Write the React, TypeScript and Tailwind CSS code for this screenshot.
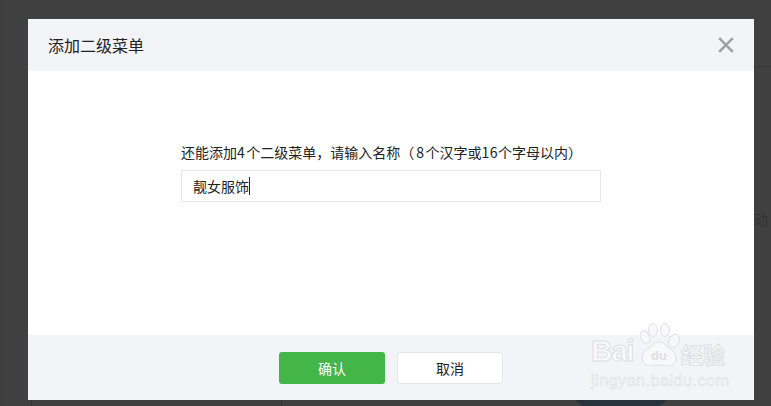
const font = "font-['Noto_Sans_CJK_SC','Noto_Sans',sans-serif]";

function Watermark() {
  return (
    <div className="absolute left-[591px] top-[323px] w-[138px] flex flex-col pointer-events-none select-none">
      <div className="flex items-end h-[43px]">
        <span className="w-[47px] text-[30px] leading-[30px] tracking-[-1.5px] font-bold font-['Liberation_Sans',sans-serif] text-[#f9f9fb] [-webkit-text-stroke:1px_#dedfe2]">
          Bai
        </span>
        <svg width="42" height="43" viewBox="0 0 42 43" className="shrink-0">
          <g fill="#f8f8fa" stroke="#dedfe2" strokeWidth="1">
            <ellipse cx="7" cy="14" rx="4.5" ry="6.5" transform="rotate(-25 7 14)" />
            <ellipse cx="15" cy="7" rx="4.5" ry="6.5" />
            <ellipse cx="27" cy="7" rx="4.5" ry="6.5" />
            <ellipse cx="36" cy="18" rx="5" ry="7" transform="rotate(25 36 18)" />
            <path d="M21 19c-5 0-7 4-10 6-4 3-7 5-7 10 0 5 4 8 9 8 3 0 5-1 8-1s5 1 9 1c5 0 8-3 8-8 0-5-3-7-7-10-3-2-5-6-10-6z" />
          </g>
          <text x="21" y="37" textAnchor="middle" fontSize="13" fontWeight="700" fontFamily="Liberation Sans" fill="#dedfe2">
            du
          </text>
        </svg>
        <span className={`ml-[1px] text-[22px] leading-[26px] font-bold text-[#f9f9fb] [-webkit-text-stroke:1px_#dedfe2] ${font}`}>
          经验
        </span>
      </div>
      <span className="mt-[6px] text-[16px] leading-[18px] tracking-[0.55px] whitespace-nowrap font-['Liberation_Sans',sans-serif] text-[#f9f9fb] [-webkit-text-stroke:0.6px_#dedfe2]">
        jingyan.baidu.com
      </span>
    </div>
  );
}

export default function App() {
  return (
    <div className={`relative w-[771px] h-[406px] overflow-hidden bg-[#404040] pt-[19px] pl-[28px] ${font}`}>
      {/* dimmed page behind the dialog */}
      <div className="absolute left-[1px] top-0 bottom-0 w-px bg-[#3c3c3c]" />
      <div className="absolute left-[31px] top-[400px] bottom-0 w-px bg-[#333333]" />
      <div className="absolute left-[281px] top-[400px] bottom-0 w-px bg-[#333333]" />
      <span className="absolute left-[754px] top-[209px] text-[14px] leading-5 text-[#333333]">动</span>
      <div className="absolute left-[754px] right-0 top-[66px] h-px bg-[#3a3a3a]" />
      <div className="absolute left-[575px] top-[400px] w-[92px] h-[6px] bg-[#26323c] [clip-path:polygon(0_0,100%_0,92%_100%,8%_100%)]" />

      <div className="relative w-[726px] h-[381px] bg-white flex flex-col">
        <div className="h-[52px] bg-[#f3f4f8] flex items-center justify-between pl-5 pr-5">
          <h3 className="text-[16px] leading-6 font-normal text-[#222222]">添加二级菜单</h3>
          <svg width="16" height="16" viewBox="0 0 16 16" className="-mt-px">
            <path d="M1.2 1.2l13.6 13.6M14.8 1.2L1.2 14.8" stroke="#a0a0a2" strokeWidth="2.6" fill="none" />
          </svg>
        </div>

        <div className="flex-1 pt-[71px] pl-[153px]">
          <p className="text-[14px] leading-5 text-[#222222] whitespace-nowrap [text-spacing-trim:space-all]">
            还能添加<span className="tracking-[1.5px]">4</span>个二级菜单，请输入名称<span className="mr-[2px]">（</span>
            <span className="tracking-[1.5px]">8</span>个汉字或<span className="tracking-[0.5px]">16</span>个字母以内）
          </p>
          <div className="mt-[8px] w-[420px] h-[32px] border border-[#e7e7eb] flex items-center pl-[11px] text-[14px] text-[#222222]">
            <span>靓女服饰</span>
            <span className="w-px h-[18px] bg-[#222222]" />
          </div>
        </div>

        <div className="h-[65px] bg-[#f3f4f8] flex items-start justify-center gap-3 pt-[17px]">
          <button className="w-[106px] h-[32px] rounded-[3px] bg-[#44b549] text-white text-[14px]">确认</button>
          <button className="w-[106px] h-[32px] rounded-[3px] bg-white border border-[#e7e7eb] text-[#222222] text-[14px]">取消</button>
        </div>
      </div>

      <Watermark />
    </div>
  );
}
